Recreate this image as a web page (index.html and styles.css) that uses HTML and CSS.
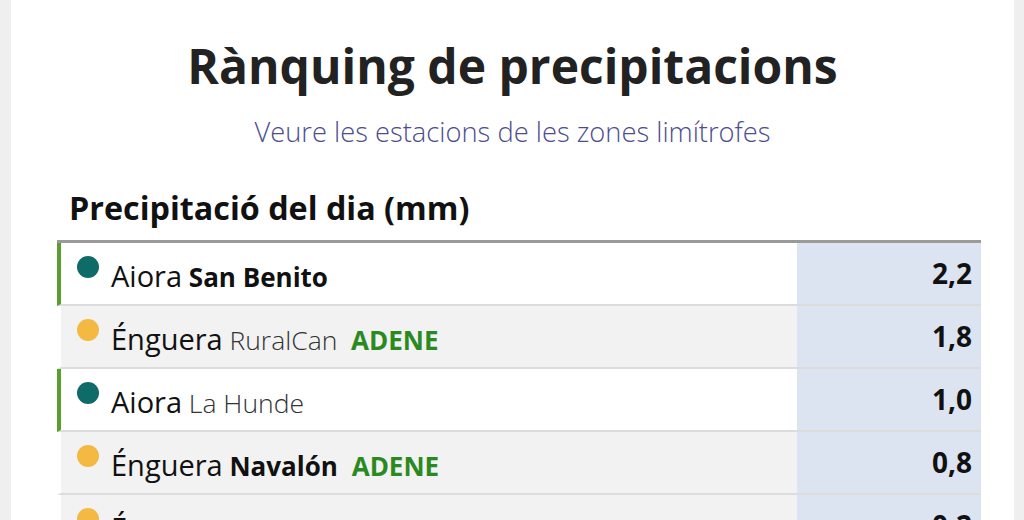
FILE: index.html
```html
<!DOCTYPE html>
<html lang="ca">
<head>
<meta charset="utf-8">
<title>Rànquing de precipitacions</title>
<link rel="stylesheet" href="styles.css">
</head>
<body>
<main class="page">
  <h1 class="title">Rànquing de precipitacions</h1>
  <p class="subtitle">Veure les estacions de les zones limítrofes</p>
  <section class="ranking">
    <h2 class="ranking-heading">Precipitació del dia (mm)</h2>
    <div class="table">
      <div class="row row-local">
        <div class="name"><span class="dot dot-teal"></span><span class="town">Aiora</span> <b class="station">San Benito</b></div>
        <div class="value">2,2</div>
      </div>
      <div class="row row-near">
        <div class="name"><span class="dot dot-yellow"></span><span class="town">Énguera</span> <span class="station-light">RuralCan</span> <b class="net">ADENE</b></div>
        <div class="value">1,8</div>
      </div>
      <div class="row row-local">
        <div class="name"><span class="dot dot-teal"></span><span class="town">Aiora</span> <span class="station-light">La Hunde</span></div>
        <div class="value">1,0</div>
      </div>
      <div class="row row-near">
        <div class="name"><span class="dot dot-yellow"></span><span class="town">Énguera</span> <b class="station">Navalón</b> <b class="net">ADENE</b></div>
        <div class="value">0,8</div>
      </div>
      <div class="row row-near">
        <div class="name"><span class="dot dot-yellow"></span><span class="town">Énguera</span> <span class="station-light">Benali</span></div>
        <div class="value">0,2</div>
      </div>
    </div>
  </section>
</main>
</body>
</html>
```
FILE: styles.css
```css
html, body {
  margin: 0;
  padding: 0;
}
body {
  background: #efefef;
  font-family: "Open Sans", "Noto Sans", "Liberation Sans", sans-serif;
  color: #111;
  padding: 0 10px 0 11px;
  height: 520px;
  overflow: hidden;
}
.page {
  background: #fff;
  min-height: 520px;
  padding-top: 34px;
}
.title {
  margin: 0;
  text-align: center;
  font-size: 48px;
  font-weight: 700;
  line-height: 63px;
  color: #222;
}
.subtitle {
  margin: 17px 0 0;
  text-align: center;
  font-size: 27.3px;
  font-weight: 300;
  line-height: 36px;
  color: #4d4d8c;
}
.ranking {
  margin: 35px 33px 0 46px;
}
.ranking-heading {
  margin: 0 0 11px;
  padding-left: 12px;
  font-size: 32.3px;
  font-weight: 700;
  line-height: 44px;
  color: #111;
}
.table {
  border-top: 3px solid #9a9a9a;
}
.row {
  display: flex;
  height: 61px;
  border-bottom: 2px solid #dcdcdc;
  border-left: 4px solid #fff;
}
.row-local {
  background: #fff;
  border-left-color: #5c9e2e;
}
.row-near {
  background: #f2f2f2;
}
.name {
  flex: 1;
  box-sizing: border-box;
  padding: 4px 0 0 16px;
  font-size: 26px;
  line-height: 57px;
  white-space: nowrap;
  overflow: hidden;
}
.dot {
  display: inline-block;
  vertical-align: top;
  width: 22px;
  height: 22px;
  border-radius: 50%;
  margin: 9px 12px 0 0;
}
.dot-teal { background: #0f6b68; }
.dot-yellow { background: #f4b942; }
.town {
  font-size: 29px;
  font-weight: 400;
  color: #111;
}
.station {
  font-weight: 700;
  color: #111;
}
.station-light {
  font-weight: 300;
  color: #333;
  font-size: 26.5px;
}
.net {
  font-weight: 700;
  color: #2b8a1f;
  margin-left: 7px;
}
.value {
  width: 184px;
  flex: none;
  background: #dde4f1;
  text-align: right;
  padding-right: 9px;
  box-sizing: border-box;
  font-size: 28px;
  font-weight: 700;
  line-height: 61px;
  color: #111;
}
```
